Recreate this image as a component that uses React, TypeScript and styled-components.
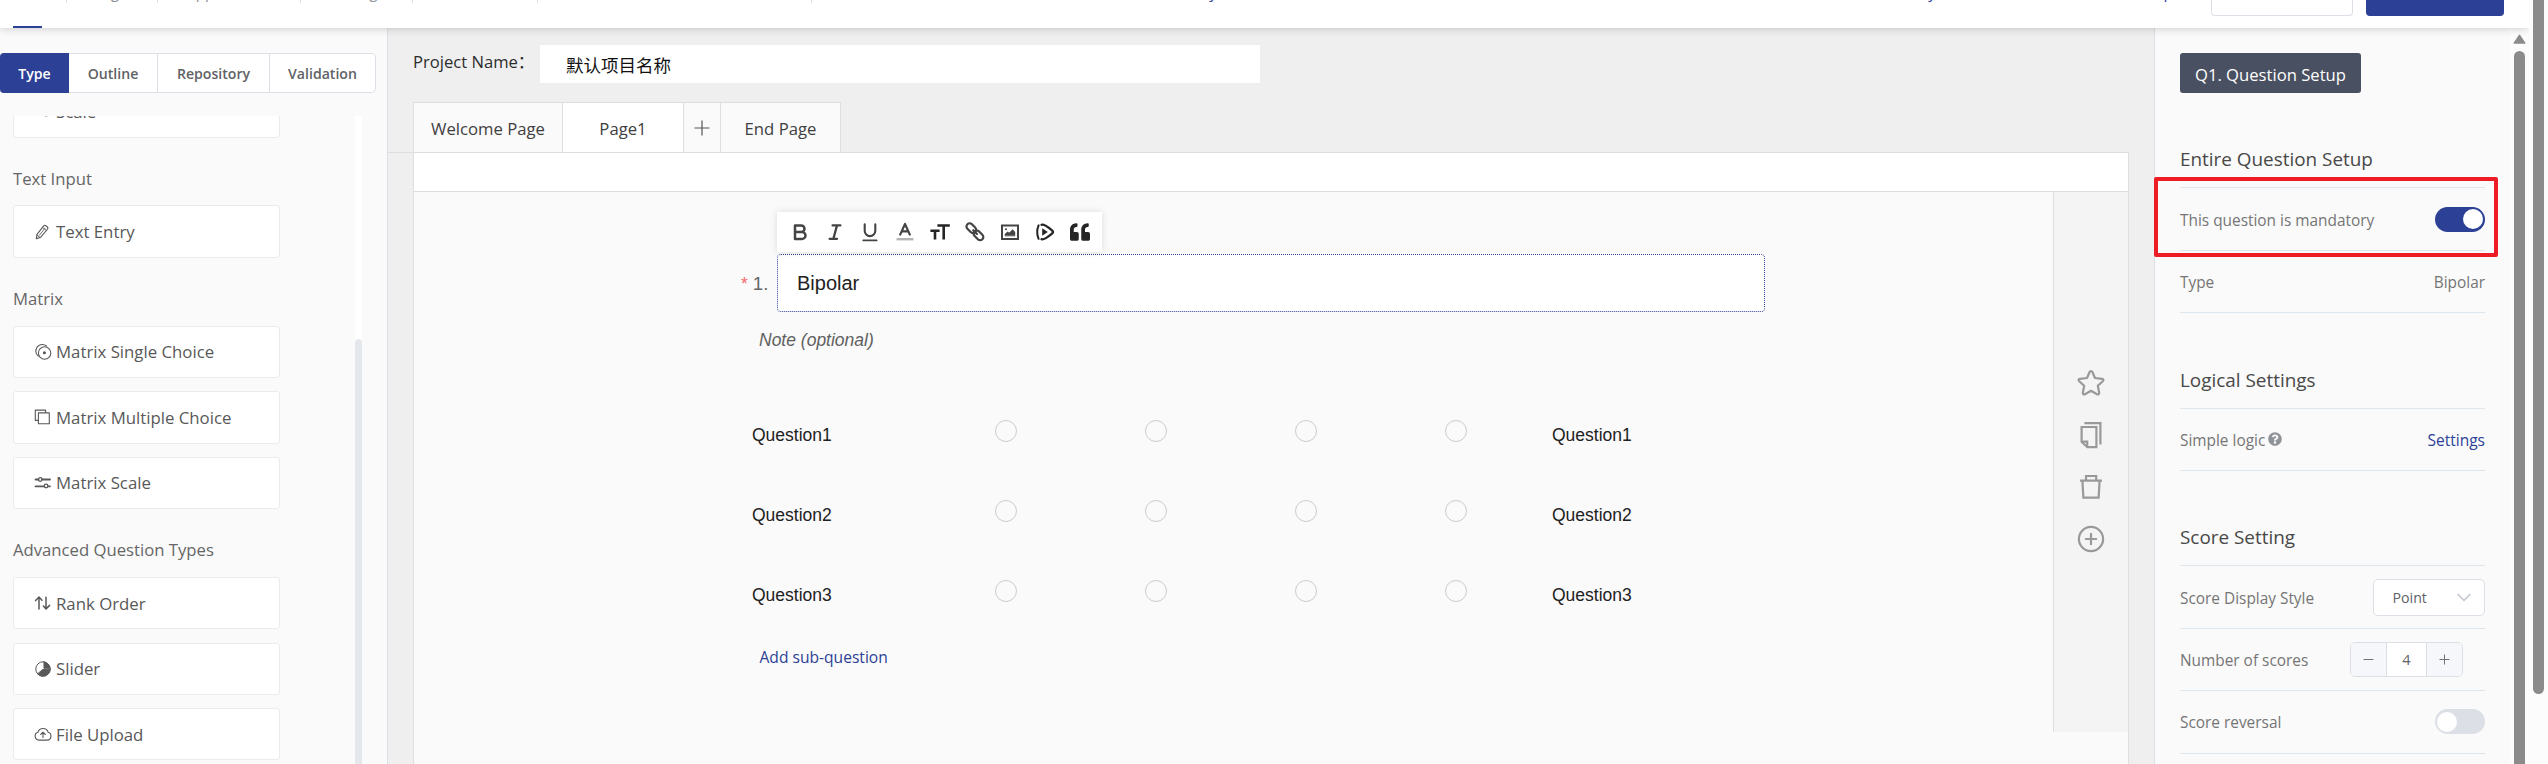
import React from "react";
import styled, { createGlobalStyle, css } from "styled-components";
import { FaQuestionCircle, FaQuoteLeft } from "react-icons/fa";

const BLUE = "#2c4096";
const LINE = "#dcdfe6";
const UI = `"Open Sans", "Noto Sans", "Noto Sans CJK SC", sans-serif`;
const ARIAL = `"Liberation Sans", Arial, sans-serif`;

const Global = createGlobalStyle`
  * { box-sizing: border-box; }
  html, body { margin: 0; padding: 0; }
  body { font-family: ${UI}; overflow: hidden; background: #fafafa; }
`;

const Screen = styled.div`
  display: flex;
  width: 2548px;
  height: 764px;
  overflow: hidden;
  background: #fafafa;
`;

const Page = styled.div`
  display: flex;
  flex-direction: column;
  width: 2529px;
  height: 764px;
`;

const Gutter = styled.div`
  position: relative;
  z-index: 3;
  width: 19px;
  height: 764px;
  padding-left: 4px;
  background: #fcfcfc;
`;

const PageThumb = styled.div`
  width: 11px;
  height: 694px;
  border-radius: 0 0 6px 6px;
  background: #8b8b8b;
`;

/* ---------- header ---------- */

const Header = styled.header`
  position: relative;
  z-index: 2;
  display: flex;
  align-items: flex-start;
  flex: none;
  height: 28px;
  background: #fff;
  box-shadow: 0 1px 8px rgba(0, 0, 0, 0.18);
`;

const NavCell = styled.div<{ $w: number; $active?: boolean }>`
  width: ${(p) => p.$w}px;
  height: 3px;
  border-right: 1px solid ${LINE};
  text-align: center;
  font-size: 15.4px;
  line-height: 20px;
  color: #909399;
  > span { display: block; margin-top: -17.5px; }
  ${(p) =>
    p.$active &&
    css`
      height: 28px;
      border-right: none;
      padding: 26px 0 0 13px;
    `}
`;

const ActiveBar = styled.div`
  width: 29px;
  height: 2px;
  background: ${BLUE};
`;

const NavLink = styled.div<{ $w: number }>`
  width: ${(p) => p.$w}px;
  margin-top: -17.5px;
  text-align: right;
  font-size: 15.4px;
  line-height: 20px;
  color: ${BLUE};
`;

const HeaderActions = styled.div`
  display: flex;
  gap: 13px;
  margin: 0 25px 0 auto;
`;

const HeaderButton = styled.div<{ $w: number; $solid?: boolean }>`
  width: ${(p) => p.$w}px;
  height: 16px;
  border: 1px solid ${(p) => (p.$solid ? BLUE : LINE)};
  border-top: none;
  border-radius: 0 0 4px 4px;
  background: ${(p) => (p.$solid ? BLUE : "#fff")};
`;

const Body = styled.div`
  display: flex;
  flex: 1;
  min-height: 0;
`;

/* ---------- left sidebar ---------- */

const Sidebar = styled.aside`
  display: flex;
  flex-direction: column;
  width: 388px;
  flex: none;
  padding-top: 25px;
  background: #fafafa;
  border-right: 1px solid ${LINE};
`;

const TabGroup = styled.div`
  display: flex;
  height: 40px;
  flex: none;
  font-size: 14.1px;
  font-weight: 600;
`;

const TabButton = styled.div<{ $w: number; $active?: boolean }>`
  display: flex;
  align-items: center;
  justify-content: center;
  width: ${(p) => p.$w}px;
  padding-top: 1px;
  border: 1px solid ${(p) => (p.$active ? BLUE : LINE)};
  border-left: none;
  background: ${(p) => (p.$active ? BLUE : "#fff")};
  color: ${(p) => (p.$active ? "#fff" : "#606266")};
  &:first-child { border-radius: 4px 0 0 4px; padding-left: 1px; }
  &:last-child { border-radius: 0 5px 5px 0; }
`;

const ListArea = styled.div`
  display: flex;
  justify-content: space-between;
  height: 648px;
  margin: 23px 25px 0 13px;
  overflow: hidden;
`;

const TypeList = styled.div`
  width: 267px;
  margin-top: -30.8px;
`;

const GroupTitle = styled.div`
  height: 67.8px;
  line-height: 81px;
  font-size: 16.7px;
  color: #666;
`;

const TypeItem = styled.div`
  display: flex;
  align-items: center;
  height: 52.4px;
  padding-left: 19.5px;
  border: 1px solid #ebebeb;
  border-radius: 3px;
  background: #fff;
  font-size: 16.8px;
  color: #585858;
  & + & { margin-top: 13.2px; }
  svg { width: 18px; height: 18px; margin-right: 4.5px; flex: none; }
`;

const ListTrack = styled.div`
  width: 7px;
  height: 648px;
  padding-top: 223px;
  background: #fff;
`;

const ListThumb = styled.div`
  height: 425px;
  border-radius: 4px 4px 0 0;
  background: #e4e8ec;
`;

/* ---------- centre ---------- */

const Main = styled.main`
  display: flex;
  flex-direction: column;
  width: 1766px;
  flex: none;
  padding-top: 17px;
  background: #efefef;
`;

const ProjectRow = styled.div`
  display: flex;
  height: 38px;
  flex: none;
  padding-left: 25px;
`;

const ProjectLabel = styled.div`
  width: 127px;
  line-height: 34px;
  font-size: 16.6px;
  color: #2c2c2c;
  white-space: nowrap;
`;

const ProjectInput = styled.div`
  width: 720px;
  padding-left: 26px;
  line-height: 40px;
  font-family: "Noto Sans CJK SC", sans-serif;
  font-size: 17.5px;
  color: #111;
  background: #fff;
`;

const PageTabs = styled.div`
  display: flex;
  height: 50px;
  flex: none;
  margin-top: 19px;
  padding-left: 25px;
`;

const PageTab = styled.div<{ $w: number; $active?: boolean }>`
  display: flex;
  align-items: center;
  justify-content: center;
  width: ${(p) => p.$w}px;
  padding-top: 1px;
  border: 1px solid #dedede;
  border-left-width: 0;
  border-bottom: none;
  background: ${(p) => (p.$active ? "#fff" : "#fafafa")};
  font-size: 16.7px;
  color: #404040;
  &:first-child { border-left-width: 1px; }
`;

const PanelRow = styled.div`
  flex: 1;
  display: flex;
  min-height: 0;
`;

const PanelLead = styled.div`
  width: 25px;
  height: 1px;
  background: #dedede;
`;

const Panel = styled.section`
  display: flex;
  flex-direction: column;
  width: 1716px;
  border: 1px solid #dedede;
  border-bottom: none;
  background: #fafafa;
`;

const PanelTop = styled.div`
  height: 39px;
  flex: none;
  background: #fff;
  border-bottom: 1px solid #dedede;
`;

const PanelBody = styled.div`
  display: flex;
  flex: 1;
`;

const Editor = styled.div`
  flex: 1;
  padding: 20px 0 0 325px;
`;

const Toolbar = styled.div`
  position: relative;
  display: flex;
  align-items: center;
  width: 325px;
  height: 40px;
  margin-left: 38px;
  padding-left: 5px;
  background: #fff;
  box-shadow: 0 0 7px rgba(0, 0, 0, 0.13);
`;

const ToolButton = styled.div`
  display: flex;
  justify-content: center;
  width: 35px;
  height: 20px;
  color: #444;
  svg { width: 20px; height: 20px; }
`;

const TitleRow = styled.div`
  display: flex;
  height: 58px;
  margin-top: 2px;
  font-family: ${ARIAL};
`;

const TitleNo = styled.div`
  width: 38px;
  padding-left: 2px;
  font-size: 18.7px;
  line-height: 59px;
  color: #666;
  white-space: nowrap;
`;

const Star = styled.span`
  margin-right: 5px;
  color: #f56c6c;
  font-size: 17.5px;
`;

const TitleInput = styled.div`
  width: 988px;
  padding-left: 19px;
  border: 1px dotted ${BLUE};
  border-radius: 4px;
  background: #fff;
  font-size: 20px;
  line-height: 57px;
  color: #222;
`;

const Note = styled.div`
  height: 82px;
  padding-left: 20px;
  font-family: ${ARIAL};
  font-size: 17.5px;
  font-style: italic;
  line-height: 56px;
  color: #606060;
`;

const BipolarRow = styled.div`
  display: grid;
  grid-template-columns: 178.5px repeat(4, 150px) 1fr;
  height: 80px;
  padding-left: 13px;
  font-family: ${ARIAL};
  font-size: 17.5px;
  color: #222;
  line-height: 82px;
`;

const Right = styled.div`
  padding-left: 21.5px;
`;

const RadioCell = styled.div`
  display: flex;
  justify-content: center;
  padding-top: 25.5px;
`;

const Radio = styled.div`
  width: 22px;
  height: 22px;
  border: 1px solid #ccc;
  border-radius: 50%;
`;

const AddLink = styled.div`
  padding: 9px 0 0 20.5px;
  font-size: 15.6px;
  line-height: 28px;
  color: ${BLUE};
`;

const SideStrip = styled.div`
  display: flex;
  flex-direction: column;
  align-items: center;
  width: 75px;
  height: 540px;
  padding-top: 177px;
  gap: 24px;
  background: #f4f4f4;
  border-left: 1px solid #dedede;
  color: #999;
  svg { width: 28px; height: 28px; flex: none; }
`;

/* ---------- right settings ---------- */

const Settings = styled.aside`
  display: flex;
  flex-direction: column;
  position: relative;
  width: 355px;
  flex: none;
  padding: 25px 0 0 25px;
  background: #fafafa;
  border-left: 1px solid ${LINE};
`;

const SetupButton = styled.div`
  width: 181px;
  height: 40px;
  flex: none;
  border-radius: 3px;
  background: #495061;
  color: #fff;
  font-size: 16.65px;
  line-height: 43px;
  text-align: center;
`;

const Section = styled.section`
  width: 305px;
  margin-top: 38.4px;
`;

const SectionTitle = styled.div`
  height: 57px;
  line-height: 57.6px;
  border-bottom: 1px solid #dfe6ec;
  font-size: 18.9px;
  color: #484848;
`;

const SettingRow = styled.div`
  display: flex;
  align-items: center;
  justify-content: space-between;
  height: 62.4px;
  border-bottom: 1px solid #dce6ee;
  font-size: 15.4px;
  color: #757575;
`;

const RowLabel = styled.div`
  display: flex;
  padding-top: 2px;
  svg { margin: 2px 0 0 3px; width: 14px; height: 14px; color: #909399; }
`;

const RowLink = styled.div`
  padding-top: 1px;
  font-size: 15.5px;
  color: ${BLUE};
`;

const Switch = styled.div<{ $on?: boolean }>`
  display: flex;
  justify-content: ${(p) => (p.$on ? "flex-end" : "flex-start")};
  width: 50px;
  height: 25px;
  padding: 2.5px 2px;
  border-radius: 13px;
  background: ${(p) => (p.$on ? BLUE : LINE)};
  &::after {
    content: "";
    width: 20px;
    height: 20px;
    border-radius: 50%;
    background: #fff;
  }
`;

const Select = styled.div`
  display: flex;
  align-items: center;
  justify-content: space-between;
  width: 112px;
  height: 37px;
  padding: 0 13px 0 18.5px;
  border: 1px solid ${LINE};
  border-radius: 5px;
  background: #fff;
  font-size: 14.2px;
  color: #606266;
`;

const Stepper = styled.div`
  display: grid;
  grid-template-columns: 35px 1fr 36px;
  width: 113px;
  height: 35px;
  margin-right: 22px;
  border: 1px solid ${LINE};
  border-radius: 5px;
  background: #fff;
  overflow: hidden;
  color: #606266;
  font-size: 14.6px;
`;

const StepCell = styled.div<{ $button?: boolean }>`
  display: flex;
  align-items: center;
  justify-content: center;
  background: ${(p) => (p.$button ? "#f5f7fa" : "#fff")};
  & + & { border-left: 1px solid ${LINE}; }
`;

const ScrollTrack = styled.div`
  display: flex;
  flex-direction: column;
  align-items: center;
  width: 20px;
  padding-top: 6px;
  background: #fcfcfc;
`;

const ScrollThumb = styled.div`
  width: 11px;
  flex: 1;
  margin-top: 7px;
  border-radius: 6px 6px 0 0;
  background: #8b8b8b;
`;

/* Red annotation frame drawn over the mandatory switch row */
const Highlight = styled.div`
  position: absolute;
  top: 149px;
  left: -1px;
  width: 344px;
  height: 79.5px;
  border: 4px solid #ee1c25;
  border-radius: 2px;
`;

/* ---------- icons ---------- */

const Line = ({ children, w = 1.3, box = 18 }: { children: React.ReactNode; w?: number; box?: number }) => (
  <svg viewBox={`0 0 ${box} ${box}`} fill="none" stroke="currentColor" strokeWidth={w} strokeLinecap="round" strokeLinejoin="round">
    {children}
  </svg>
);

const PencilIcon = () => (
  <Line w={1.1}>
    <path d="M2.3 15.6 3 11.3 9.7 2.9Q10.6 1.8 11.8 2.7L13.4 4Q14.4 5 13.6 6L6.8 14.2Z" />
    <path d="M5.4 12.2 10.9 5.3M8.6 4.4 12.1 7.4M2.9 12 5.9 14.4" strokeWidth=".9" />
  </Line>
);
const MatrixSingleIcon = () => (
  <Line w={1.1}>
    <circle cx="10.6" cy="10" r="6.2" />
    <path d="M4.2 13.2A6.2 6.2 0 1 1 12.6 3" />
    <circle cx="10.4" cy="9.8" r="1" fill="currentColor" />
  </Line>
);
const MatrixMultiIcon = () => (
  <Line w={1.1}>
    <path d="M5.1 4.7H16V15.6H5.1ZM4.8 12.2H2V1.9H12.3V4.4" transform="translate(-.7 .2)" />
  </Line>
);
const ScaleIcon = () => (
  <Line w={1.8}>
    <path d="M1.5 5.5H4.5M8 5.5H16M1.5 12.3H10.2M14.2 12.3H16" />
    <circle cx="6.2" cy="5.5" r="1.8" strokeWidth="1.3" />
    <circle cx="12.1" cy="12" r="1.8" strokeWidth="1.3" />
  </Line>
);
const RankIcon = () => (
  <Line w={1.5}>
    <path d="M5 15V3.2M1.6 6.6 5 3.1 8 6.2M12 3.2V14.8M9.4 12 12 14.9 15.6 11.4" />
  </Line>
);
const PieIcon = () => (
  <Line w={1}>
    <circle cx="9" cy="9" r="7.2" />
    <path d="M9.3 9.3H16.1A7.2 7.2 0 0 1 3.8 14.1ZM10 2V8.2H16A7.2 7.2 0 0 0 10 2Z" fill="currentColor" />
  </Line>
);
const CloudIcon = () => (
  <Line w={1.1}>
    <path d="M5 15.1H13.2A4 4 0 0 0 14.2 7.3 5.4 5.4 0 0 0 3.9 7.3 4 4 0 0 0 5 15.1Z" />
    <path d="M9 12.5V7.4M6.7 9.5 9 7.2 11.3 9.5" />
  </Line>
);

const BoldIcon = () => (
  <Line box={20} w={2.5}>
    <path d="M5 3.4H11.2A3.3 3.3 0 0 1 11.2 10H5ZM5 10H12A3.5 3.5 0 0 1 12 17H5Z" />
  </Line>
);
const ItalicIcon = () => (
  <Line box={20} w={2.3}>
    <path d="M7.6 3.4H15.4M4.6 16.8H12M12 3.4 8.4 16.8" />
  </Line>
);
const UnderlineIcon = () => (
  <Line box={20} w={2.1}>
    <path d="M4.7 2.4V8.8A5.2 5.2 0 0 0 15.3 8.8V2.4" />
    <path d="M3.2 18.4H16.8" strokeWidth="1.6" />
  </Line>
);
const ColorIcon = () => (
  <Line box={20} w={2.2}>
    <path d="M5.2 12.6 10 2 14.8 12.6M7 9.4H13" />
    <path d="M1.6 17.2H18.4" stroke="#b3b3b3" strokeWidth="2.4" strokeLinecap="butt" />
  </Line>
);
const SizeIcon = () => (
  <Line box={20} w={2.6}>
    <path d="M7.4 3.5H19.8M13.7 3.5V17.4M.4 8.8H9.6M5 8.8V17.4" strokeLinecap="butt" stroke="#252525" />
  </Line>
);
const LinkIcon = () => (
  <Line box={20} w={2.2}>
    <rect x="0.8" y="3" width="11" height="6.4" rx="3.2" transform="rotate(45 6.3 6.2)" />
    <rect x="8" y="10.2" width="11" height="6.4" rx="3.2" transform="rotate(45 13.5 13.4)" />
    <path d="M8.2 8.2 12 12" />
  </Line>
);
const PictureIcon = () => (
  <Line box={20} w={2}>
    <path d="M2 3.4H18V17H2Z" strokeLinejoin="miter" />
    <path d="M5 13.8V12L7.6 9.8 9.2 10.8 12.7 7.6 15 10V13.8Z" fill="currentColor" strokeWidth=".4" />
    <circle cx="6" cy="7.2" r="1" fill="currentColor" stroke="none" />
  </Line>
);
const VideoIcon = () => (
  <Line box={20} w={2.4}>
    <path d="M3.6 3.4Q.8 10 3.6 16.8" stroke="#252525" strokeWidth="2" />
    <path d="M6.6 2.8Q9 1.8 17 8.4 19 10 17 11.6 9 18.2 6.6 17.2" stroke="#252525" />
    <path d="M7.2 6.2V13.8L12.8 10Z" fill="#252525" stroke="none" />
  </Line>
);

const StarIcon = () => (
  <Line box={28} w={2.2}>
    <path d="M14 2.1Q15 2.1 15.4 3L18 9 24.9 9.8Q27.4 10.4 25.8 12.2L20.8 16.8 22.2 23.8Q22.1 26 20 25.2L14 21.8 8 25.2Q5.9 26 5.8 23.8L7.2 16.8 2.2 12.2Q.6 10.4 3.1 9.8L10 9 12.6 3Q13 2.1 14 2.1Z" />
  </Line>
);
const CopyIcon = () => (
  <Line box={28} w={2.2}>
    <path d="M4.6 6H19.4V26.2H10.4L4.6 20.8ZM4.8 20.6H10.2V26M7.4 2.2H23.4V23.4" strokeLinejoin="miter" strokeLinecap="butt" />
  </Line>
);
const TrashIcon = () => (
  <Line box={28} w={2.2}>
    <path d="M3 7.6H25M9 7.4V3H19.2V7.4M5.4 8 6.4 24.6H21.6L22.6 8" strokeLinejoin="miter" strokeLinecap="butt" />
  </Line>
);
const PlusCircleIcon = () => (
  <Line box={28} w={2.2}>
    <circle cx="14" cy="14" r="12.1" />
    <path d="M14 8.8V19.2M8.8 14H19.2" />
  </Line>
);

const TOOLS = [BoldIcon, ItalicIcon, UnderlineIcon, ColorIcon, SizeIcon, LinkIcon, PictureIcon, VideoIcon];
const QUESTIONS = ["Question1", "Question2", "Question3"];

export default function App() {
  return (
    <Screen>
      <Global />
      <Page>
        <Header>
          <NavCell $w={66} $active><ActiveBar /></NavCell>
          <NavCell $w={1} />
          <NavCell $w={91}><span>Logic</span></NavCell>
          <NavCell $w={143}><span>Appearance</span></NavCell>
          <NavCell $w={112}><span>Settings</span></NavCell>
          <NavCell $w={125} />
          <NavCell $w={274} />
          <NavLink $w={405}>Survey</NavLink>
          <NavLink $w={719}>Library</NavLink>
          <NavLink $w={237}>Help</NavLink>
          <HeaderActions>
            <HeaderButton $w={142} />
            <HeaderButton $w={138} $solid />
          </HeaderActions>
        </Header>
        <Body>
          <Sidebar>
            <TabGroup>
              <TabButton $w={69} $active>Type</TabButton>
              <TabButton $w={89}>Outline</TabButton>
              <TabButton $w={112}>Repository</TabButton>
              <TabButton $w={106}>Validation</TabButton>
            </TabGroup>
            <ListArea>
              <TypeList>
                <TypeItem><ScaleIcon />Scale</TypeItem>
                <GroupTitle>Text Input</GroupTitle>
                <TypeItem><PencilIcon />Text Entry</TypeItem>
                <GroupTitle>Matrix</GroupTitle>
                <TypeItem><MatrixSingleIcon />Matrix Single Choice</TypeItem>
                <TypeItem><MatrixMultiIcon />Matrix Multiple Choice</TypeItem>
                <TypeItem><ScaleIcon />Matrix Scale</TypeItem>
                <GroupTitle>Advanced Question Types</GroupTitle>
                <TypeItem><RankIcon />Rank Order</TypeItem>
                <TypeItem><PieIcon />Slider</TypeItem>
                <TypeItem><CloudIcon />File Upload</TypeItem>
              </TypeList>
              <ListTrack><ListThumb /></ListTrack>
            </ListArea>
          </Sidebar>

          <Main>
            <ProjectRow>
              <ProjectLabel>Project Name：</ProjectLabel>
              <ProjectInput>默认项目名称</ProjectInput>
            </ProjectRow>
            <PageTabs>
              <PageTab $w={150}>Welcome Page</PageTab>
              <PageTab $w={121} $active>Page1</PageTab>
              <PageTab $w={37}>
                <svg width="16" height="16" viewBox="0 0 16 16" stroke="#555" strokeWidth="1.2"><path d="M8 .5V15.5M.5 8H15.5" /></svg>
              </PageTab>
              <PageTab $w={120}>End Page</PageTab>
            </PageTabs>
            <PanelRow>
              <PanelLead />
              <Panel>
                <PanelTop />
                <PanelBody>
                  <Editor>
                    <Toolbar>
                      {TOOLS.map((Icon, i) => (
                        <ToolButton key={i}><Icon /></ToolButton>
                      ))}
                      <ToolButton><FaQuoteLeft color="#252525" /></ToolButton>
                    </Toolbar>
                    <TitleRow>
                      <TitleNo><Star>*</Star>1.</TitleNo>
                      <TitleInput>Bipolar</TitleInput>
                    </TitleRow>
                    <Note>Note (optional)</Note>
                    {QUESTIONS.map((q) => (
                      <BipolarRow key={q}>
                        <div>{q}</div>
                        {[0, 1, 2, 3].map((n) => (
                          <RadioCell key={n}><Radio /></RadioCell>
                        ))}
                        <Right>{q}</Right>
                      </BipolarRow>
                    ))}
                    <AddLink>Add sub-question</AddLink>
                  </Editor>
                  <SideStrip>
                    <StarIcon />
                    <CopyIcon />
                    <TrashIcon />
                    <PlusCircleIcon />
                  </SideStrip>
                </PanelBody>
              </Panel>
            </PanelRow>
          </Main>

          <Settings>
            <SetupButton>Q1. Question Setup</SetupButton>
            <Section>
              <SectionTitle>Entire Question Setup</SectionTitle>
              <SettingRow><RowLabel>This question is mandatory</RowLabel><Switch $on /></SettingRow>
              <SettingRow><RowLabel>Type</RowLabel><RowLabel>Bipolar</RowLabel></SettingRow>
            </Section>
            <Section>
              <SectionTitle>Logical Settings</SectionTitle>
              <SettingRow>
                <RowLabel>Simple logic<FaQuestionCircle /></RowLabel>
                <RowLink>Settings</RowLink>
              </SettingRow>
            </Section>
            <Section>
              <SectionTitle>Score Setting</SectionTitle>
              <SettingRow>
                <RowLabel>Score Display Style</RowLabel>
                <Select>
                  Point
                  <svg width="14" height="9" viewBox="0 0 14 9" fill="none" stroke="#c0c4cc" strokeWidth="1.4"><path d="M.7 1 7 7.4 13.3 1" /></svg>
                </Select>
              </SettingRow>
              <SettingRow>
                <RowLabel>Number of scores</RowLabel>
                <Stepper>
                  <StepCell $button><svg width="11" height="11" stroke="#707276"><path d="M.5 5.5H10.5" /></svg></StepCell>
                  <StepCell>4</StepCell>
                  <StepCell $button><svg width="11" height="11" stroke="#707276"><path d="M.5 5.5H10.5M5.5 .5V10.5" /></svg></StepCell>
                </Stepper>
              </SettingRow>
              <SettingRow><RowLabel>Score reversal</RowLabel><Switch /></SettingRow>
            </Section>
            <Highlight />
          </Settings>
          <ScrollTrack>
            <svg width="13" height="10" viewBox="0 0 13 10" fill="#8b8b8b" stroke="#8b8b8b" strokeWidth="1" strokeLinejoin="round"><path d="M6.5 .8 12.2 9.2H.8Z" /></svg>
            <ScrollThumb />
          </ScrollTrack>
        </Body>
      </Page>
      <Gutter><PageThumb /></Gutter>
    </Screen>
  );
}
